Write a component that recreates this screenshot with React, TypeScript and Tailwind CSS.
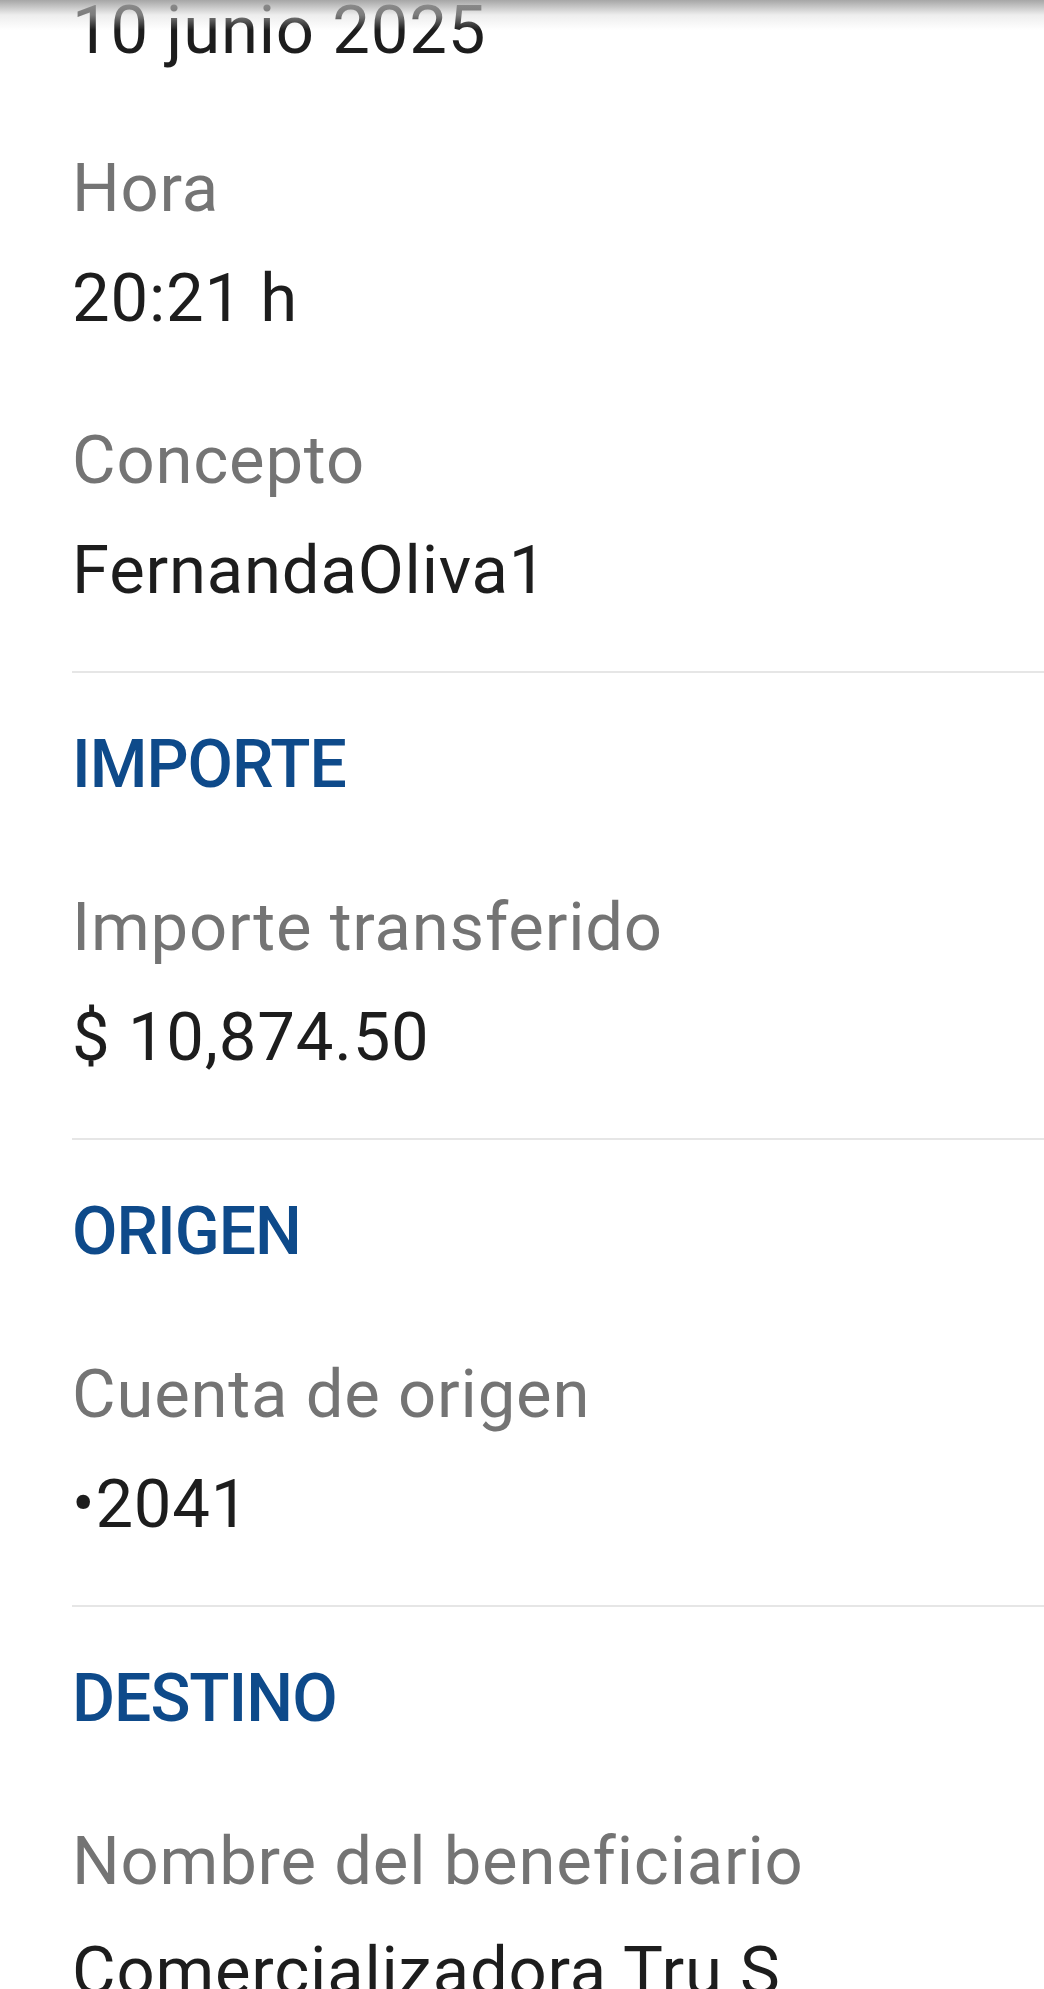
const sections = [
  {
    title: "IMPORTE",
    fields: [{ label: "Importe transferido", value: "$ 10,874.50" }],
  },
  {
    title: "ORIGEN",
    fields: [{ label: "Cuenta de origen", value: "•2041" }],
  },
  {
    title: "DESTINO",
    fields: [{ label: "Nombre del beneficiario", value: "Comercializadora Tru S" }],
  },
];

function Field({ label, value, first }: { label: string; value: string; first?: boolean }) {
  return (
    <div className={first ? "mt-[78px]" : "mt-[82px]"}>
      <p className="text-[67px] leading-[80px] text-[#747474] tracking-[0.012em]">{label}</p>
      <p className="mt-[30px] text-[67px] leading-[80px] text-[#1d1d1d] tracking-[0.012em]">{value}</p>
    </div>
  );
}

export default function App() {
  return (
    <div className="relative h-[1989px] w-[1044px] overflow-hidden bg-white font-['Roboto',sans-serif]">
      {/* toolbar shadow */}
      <div className="absolute inset-x-0 top-0 z-10 h-[30px] bg-gradient-to-b from-[#9c9c9c]/90 via-[#dcdcdc]/50 to-transparent" />

      <div className="-mt-[10px] pl-[72px]">
        {/* date + details */}
        <p className="text-[67px] leading-[80px] text-[#1d1d1d] tracking-[0.012em]">10 junio 2025</p>
        <Field label="Hora" value="20:21 h" first />
        <Field label="Concepto" value="FernandaOliva1" />

        {sections.map((s) => (
          <div key={s.title}>
            <div className="mt-[61px] h-[2px] bg-[#e6e6e6]" />
            <h2 className="mt-[52px] text-[66px] leading-[80px] font-medium text-[#0e4a8a] tracking-[-0.015em]">{s.title}</h2>
            {s.fields.map((f) => (
              <Field key={f.label} label={f.label} value={f.value} />
            ))}
          </div>
        ))}
      </div>
    </div>
  );
}
